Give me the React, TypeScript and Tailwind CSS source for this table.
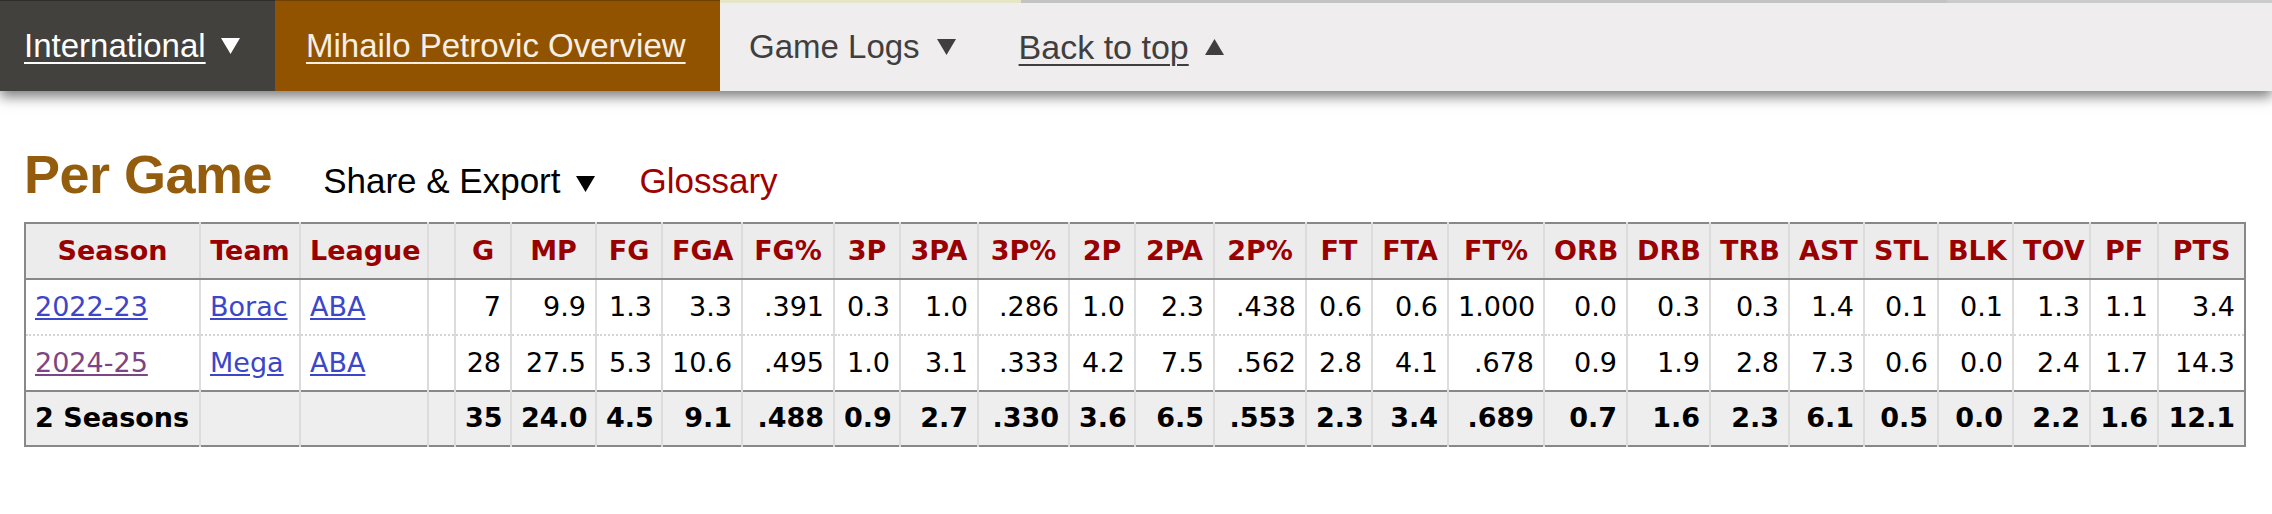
import React from 'react';

const cols = [
  { label: 'Season', w: 'w-[175px]', left: true },
  { label: 'Team', w: 'w-[100px]', left: true },
  { label: 'League', w: 'w-[128px]', left: true },
  { label: '', w: 'w-[27px]', left: true },
  { label: 'G', w: 'w-[56px]' },
  { label: 'MP', w: 'w-[85px]' },
  { label: 'FG', w: 'w-[66px]' },
  { label: 'FGA', w: 'w-[80px]' },
  { label: 'FG%', w: 'w-[92px]' },
  { label: '3P', w: 'w-[66px]' },
  { label: '3PA', w: 'w-[78px]' },
  { label: '3P%', w: 'w-[91px]' },
  { label: '2P', w: 'w-[66px]' },
  { label: '2PA', w: 'w-[79px]' },
  { label: '2P%', w: 'w-[92px]' },
  { label: 'FT', w: 'w-[66px]' },
  { label: 'FTA', w: 'w-[76px]' },
  { label: 'FT%', w: 'w-[96px]' },
  { label: 'ORB', w: 'w-[83px]' },
  { label: 'DRB', w: 'w-[83px]' },
  { label: 'TRB', w: 'w-[79px]' },
  { label: 'AST', w: 'w-[75px]' },
  { label: 'STL', w: 'w-[74px]' },
  { label: 'BLK', w: 'w-[75px]' },
  { label: 'TOV', w: 'w-[77px]' },
  { label: 'PF', w: 'w-[68px]' },
  { label: 'PTS', w: 'w-[87px]' },
];

const rows = [
  {
    season: '2022-23', visited: false, team: 'Borac', league: 'ABA',
    stats: ['7', '9.9', '1.3', '3.3', '.391', '0.3', '1.0', '.286', '1.0', '2.3', '.438', '0.6', '0.6', '1.000', '0.0', '0.3', '0.3', '1.4', '0.1', '0.1', '1.3', '1.1', '3.4'],
  },
  {
    season: '2024-25', visited: true, team: 'Mega', league: 'ABA',
    stats: ['28', '27.5', '5.3', '10.6', '.495', '1.0', '3.1', '.333', '4.2', '7.5', '.562', '2.8', '4.1', '.678', '0.9', '1.9', '2.8', '7.3', '0.6', '0.0', '2.4', '1.7', '14.3'],
  },
];

const totals = ['35', '24.0', '4.5', '9.1', '.488', '0.9', '2.7', '.330', '3.6', '6.5', '.553', '2.3', '3.4', '.689', '0.7', '1.6', '2.3', '6.1', '0.5', '0.0', '2.2', '1.6', '12.1'];

function Tri({ up = false, className = '' }: { up?: boolean; className?: string }) {
  return (
    <svg width="19" height="16" viewBox="0 0 19 16" className={className} fill="currentColor">
      {up ? <path d="M9.5 0 L19 16 L0 16 Z" /> : <path d="M0 0 L19 0 L9.5 16 Z" />}
    </svg>
  );
}

const cell = 'px-[9px] whitespace-nowrap border-r-2 border-[#dcdcdc] last:border-r-0';

export default function App() {
  return (
    <div className="w-[2272px] h-[514px] bg-white overflow-hidden font-['Liberation_Sans',Arial,sans-serif]">
      {/* top nav */}
      <div className="relative z-10 flex h-[91px] shadow-[0_6px_12px_rgba(0,0,0,0.5)]">
        <div className="w-[275px] h-full bg-[#43413d] border-t border-[#2e2d2a] flex items-center pl-[24px] gap-[15px] text-white text-[33px]">
          <span className="underline decoration-2 underline-offset-[5px]">International</span>
          <Tri />
        </div>
        <div className="w-[445px] h-full bg-[#915300] border-t border-[#6e3f00] flex items-center pl-[31px] text-[#f8efe4] text-[33px]">
          <span className="underline decoration-2 underline-offset-[5px]">Mihailo Petrovic Overview</span>
        </div>
        <div className="flex-1 flex flex-col bg-[#efeded]">
          <div className="flex h-[3px]">
            <div className="w-[301px] bg-[#e6e6c6]" />
            <div className="w-[926px] bg-[#c3c3c3]" />
            <div className="flex-1 bg-[#cbcbcb]" />
          </div>
          <div className="flex-1 flex items-center pl-[29px] text-[33px] text-[#3f3f3f]">
            <span>Game Logs</span>
            <Tri className="ml-[17px]" />
            <span className="ml-[63px] underline decoration-2 underline-offset-[5px] text-[34px]">Back to top</span>
            <Tri up className="ml-[16px]" />
          </div>
        </div>
      </div>

      {/* section header */}
      <div className="px-[24px]">
        <div className="flex items-baseline mt-[56px] h-[54px]">
          <h2 className="text-[54px] leading-none font-bold text-[#945d0d] tracking-[-0.5px]">Per Game</h2>
          <div className="ml-[51px] flex items-baseline text-[35px] text-black">
            <span>Share &amp; Export</span>
            <Tri className="ml-[15px] self-center mt-[6px]" />
          </div>
          <span className="ml-[45px] text-[35px] text-[#a00000]">Glossary</span>
        </div>

        {/* stats table */}
        <table className="mt-[21px] table-fixed border-collapse w-[2220px] border-2 border-[#888] font-['DejaVu_Sans',Verdana,sans-serif] text-[27px] text-black">
          <colgroup>
            {cols.map((c, i) => (
              <col key={i} className={c.w} />
            ))}
          </colgroup>
          <thead>
            <tr className="h-[56px] bg-[#ececec]">
              {cols.map((c, i) => (
                <th key={i} className={`${cell} border-b-2 border-b-[#888] font-bold text-center text-[#990000]`}>
                  {c.label}
                </th>
              ))}
            </tr>
          </thead>
          <tbody>
            {rows.map((r, ri) => (
              <tr key={r.season} className={`h-[56px] bg-white ${ri === 0 ? 'border-b-2 border-dotted border-[#d4d4d4]' : ''}`}>
                <td className={`${cell} text-left`}>
                  <a className={`underline ${r.visited ? 'text-[#7d4585]' : 'text-[#3c46c8]'}`}>{r.season}</a>
                </td>
                <td className={`${cell} text-left`}>
                  <a className="underline text-[#3c46c8]">{r.team}</a>
                </td>
                <td className={`${cell} text-left`}>
                  <a className="underline text-[#3c46c8]">{r.league}</a>
                </td>
                <td className={cell}></td>
                {r.stats.map((s, si) => (
                  <td key={si} className={`${cell} text-right`}>
                    {s}
                  </td>
                ))}
              </tr>
            ))}
          </tbody>
          <tfoot>
            <tr className="h-[55px] bg-[#eeeeee] font-bold">
              <td className={`${cell} border-t-2 border-t-[#888] text-left`}>2 Seasons</td>
              <td className={`${cell} border-t-2 border-t-[#888]`}></td>
              <td className={`${cell} border-t-2 border-t-[#888]`}></td>
              <td className={`${cell} border-t-2 border-t-[#888]`}></td>
              {totals.map((s, si) => (
                <td key={si} className={`${cell} border-t-2 border-t-[#888] text-right`}>
                  {s}
                </td>
              ))}
            </tr>
          </tfoot>
        </table>
      </div>
    </div>
  );
}
